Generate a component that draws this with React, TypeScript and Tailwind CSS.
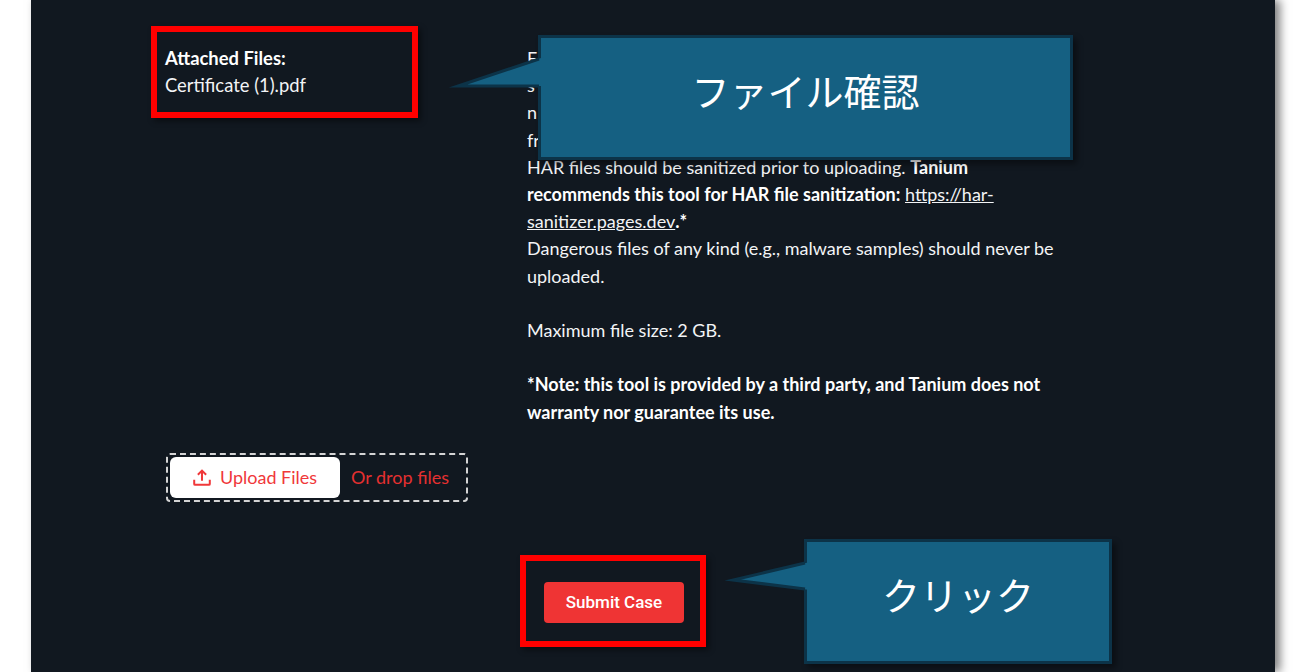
import React from "react";

const latoFont = "font-['Lato','Noto_Sans',sans-serif]";

function RedBox({ className }: { className: string }) {
  return (
    <div
      className={`absolute border-[6px] border-[#ff0000] shadow-[3px_3px_6px_rgba(0,0,0,0.45)] ${className}`}
    />
  );
}

function Callout({
  text,
  className,
  tailBox,
  viewBox,
  fill,
  line,
}: {
  text: string;
  className: string;
  tailBox: string;
  viewBox: string;
  fill: string;
  line: string;
}) {
  return (
    <div
      className={`absolute flex items-center justify-center border-[3px] border-[#0c3348] bg-[#156082] shadow-[4px_4px_6px_rgba(0,0,0,0.4)] ${className}`}
    >
      <svg className={`absolute overflow-visible ${tailBox}`} viewBox={viewBox}>
        <polygon points={fill} fill="#156082" />
        <polyline points={line} fill="none" stroke="#0c3348" strokeWidth="3" strokeMiterlimit="10" />
      </svg>
      <span className="relative font-['Noto_Sans_CJK_JP',sans-serif] text-[38px] leading-none font-normal text-white">
        {text}
      </span>
    </div>
  );
}

export default function App() {
  return (
    <div className="relative h-[672px] w-[1316px] overflow-hidden bg-white">
      <div
        className={`ml-[31px] flex h-[672px] w-[1244px] flex-col bg-[#111820] pt-[45px] text-[18px] leading-[27.2px] text-[#f3f4f6] shadow-[5px_0_9px_rgba(0,0,0,0.5)] ${latoFont}`}
      >
        <div className="flex">
          <div className="ml-[134px] w-[362px] text-[18.4px]">
            <div className="font-bold text-white">Attached Files:</div>
            <div>Certificate (1).pdf</div>
          </div>
          <div className="w-[530px]">
            <div>F</div>
            <div>s</div>
            <div>n</div>
            <div>fr</div>
            <div>
              HAR files should be sanitized prior to uploading.{" "}
              <strong className="font-bold text-white">
                Tanium recommends this tool for HAR file sanitization:
              </strong>{" "}
              <a className="underline">https://har-sanitizer.pages.dev</a>
              <strong className="font-bold text-white">.*</strong>
            </div>
            <div>Dangerous files of any kind (e.g., malware samples) should never be uploaded.</div>
            <div className="mt-[27.2px]">Maximum file size: 2 GB.</div>
            <div className="mt-[27.2px] font-bold text-white">
              *Note: this tool is provided by a third party, and Tanium does not warranty nor guarantee its use.
            </div>
          </div>
        </div>

        <div className="mt-[27px] ml-[135px] flex h-[49px] w-[302px] items-center rounded border-2 border-dashed border-[#d4d4d4] pl-[2px]">
          <button className="flex h-[41px] w-[170px] items-center justify-center gap-[7px] rounded-md bg-white pr-[2px] text-[#f0383a]">
            <svg width="22" height="22" viewBox="0 0 24 24" fill="none" stroke="currentColor" strokeWidth="2.2">
              <path d="M12 16V5M7.5 9.5 12 5l4.5 4.5M3.5 15v4.5a1 1 0 0 0 1 1h15a1 1 0 0 0 1-1V15" />
            </svg>
            Upload Files
          </button>
          <span className="ml-[11px] text-[#e53030]">Or drop files</span>
        </div>

        <div className="mt-[80px] ml-[513px]">
          <button className="h-[41px] w-[140px] rounded bg-[#ef3434] font-['Roboto',sans-serif] text-[17px] font-medium text-white">
            Submit Case
          </button>
        </div>
      </div>

      <RedBox className="top-[26px] left-[151px] h-[92px] w-[267px]" />
      <RedBox className="top-[555px] left-[520px] h-[92px] w-[186px]" />

      <Callout
        text="ファイル確認"
        className="top-[35px] left-[538px] h-[125px] w-[535px] pb-[15px]"
        tailBox="top-[16px] left-[-94px] h-[36px] w-[98px]"
        viewBox="0 0 98 36"
        fill="97,3 11,32 97,32"
        line="92,5 11,32 92,32"
      />
      <Callout
        text="クリック"
        className="top-[539px] left-[804px] h-[125px] w-[308px] pb-[16px]"
        tailBox="top-[16px] left-[-84px] h-[36px] w-[90px]"
        viewBox="0 0 90 36"
        fill="87,4 10,22 87,32"
        line="82,5 10,22 82,31"
      />
    </div>
  );
}
